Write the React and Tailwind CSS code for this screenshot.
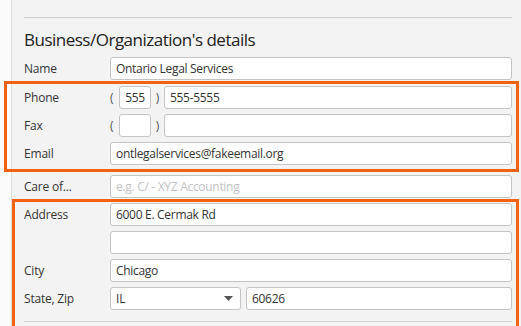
import React from 'react';

const font = { fontFamily: '"Segoe UI", "Open Sans", "Noto Sans", sans-serif' };

function Field({ value, placeholder, className = '' }) {
    return (
        <div className={`h-[23px] bg-white border border-[#c4c4c4] rounded-[3px] flex items-center px-[5px] text-[12px] tracking-[-0.3px] ${className}`}>
            {value ? (
                <span className="text-[#333]">{value}</span>
            ) : (
                <span className="text-[#c2c2c2]">{placeholder}</span>
            )}
        </div>
    );
}

function Row({ label, children, className = '' }) {
    return (
        <div className={`flex items-center ${className}`}>
            <div className="w-[86px] shrink-0 text-[12px] tracking-[-0.2px] text-[#333]">{label}</div>
            <div className="flex-1 flex items-center">{children}</div>
        </div>
    );
}

function PhoneInputs({ area, number }) {
    return (
        <>
            <span className="w-[9px] text-[12px] text-[#555]">(</span>
            <Field value={area} className="w-[32px] justify-center px-0" />
            <span className="w-[13px] text-center text-[12px] text-[#555]">)</span>
            <Field value={number} className="flex-1" />
        </>
    );
}

export default function App() {
    return (
        <div className="relative w-[521px] h-[326px] overflow-hidden bg-[#fbfbfb] flex" style={font}>
            {/* left strip */}
            <div className="w-[11px] shrink-0" />

            {/* panel */}
            <div className="flex-1 bg-[#f3f3f3] border-l border-[#dedede] pl-[12px] pr-[9px] pt-[17px]">
                <div className="border-t border-[#cdcdcd]" />
                <h2 className="mt-[11px] text-[17px] leading-[22px] tracking-[-0.5px] text-[#222]">Business/Organization's details</h2>

                <div className="mt-[6px] flex flex-col gap-[5px]">
                    <Row label="Name">
                        <Field value="Ontario Legal Services" className="flex-1" />
                    </Row>
                    <Row label="Phone" className="mt-[1px]">
                        <PhoneInputs area="555" number="555-5555" />
                    </Row>
                    <Row label="Fax">
                        <PhoneInputs />
                    </Row>
                    <Row label="Email">
                        <Field value="ontlegalservices@fakeemail.org" className="flex-1" />
                    </Row>
                    <Row label="Care of..." className="mt-[5px]">
                        <Field placeholder="e.g. C/ - XYZ Accounting" className="flex-1" />
                    </Row>
                    <Row label="Address">
                        <Field value="6000 E. Cermak Rd" className="flex-1" />
                    </Row>
                    <Row label="">
                        <Field className="flex-1" />
                    </Row>
                    <Row label="City">
                        <Field value="Chicago" className="flex-1" />
                    </Row>
                    <Row label="State, Zip">
                        <div className="w-[131px] h-[23px] bg-white border border-[#c4c4c4] rounded-[3px] flex items-center justify-between px-[5px] text-[12px] text-[#333]">
                            <span>IL</span>
                            <svg width="9" height="5" viewBox="0 0 9 5" className="mr-[2px]">
                                <path d="M0 0 H9 L4.5 5 Z" fill="#555" />
                            </svg>
                        </div>
                        <Field value="60626" className="flex-1 ml-[5px]" />
                    </Row>
                </div>

                <div className="mt-[11px] border-t border-[#d2d2d2]" />
            </div>

            {/* highlight overlays */}
            <div className="absolute left-[4px] top-[81px] w-[515px] h-[91px] border-[3px] border-[#f2620f]" />
            <div className="absolute left-[12px] top-[199px] w-[507px] h-[130px] border-[3px] border-[#f2620f]" />
        </div>
    );
}
